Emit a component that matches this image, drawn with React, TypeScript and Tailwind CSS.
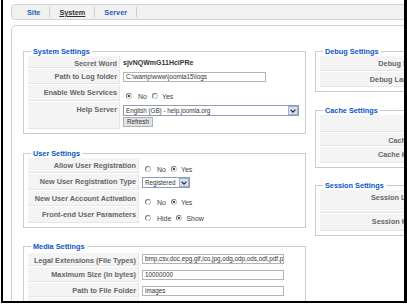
import type { ReactNode } from 'react'

const labelCls =
  'shrink-0 bg-[#f4f4f4] border-b border-r border-[#e6e6e6] pr-[2px] pt-[3px] text-right text-[7.3px] leading-[9px] font-bold text-[#666] whitespace-nowrap'

function Fieldset({ legend, className = '', children }: { legend: string; className?: string; children: ReactNode }) {
  return (
    <fieldset className={`min-w-0 border border-[#cccccc] px-[4px] pb-[4px] ${className}`}>
      <legend className="ml-[3px] px-[2px] text-[7.3px] font-bold leading-[9px] text-[#0b55c4]">{legend}</legend>
      {children}
    </fieldset>
  )
}

function Row({ label, h, w, children }: { label: string; h: string; w: string; children?: ReactNode }) {
  return (
    <div className={`flex gap-[1px] ${h}`}>
      <div className={`${labelCls} ${w}`}>{label}</div>
      <div className="min-w-0 flex-1 pl-[2px] pt-[3px]">{children}</div>
    </div>
  )
}

function Radio({ checked = false, className = '' }: { checked?: boolean; className?: string }) {
  return (
    <span
      className={`flex h-[6px] w-[6px] shrink-0 items-center justify-center rounded-full border border-[#7a7a7a] border-b-[#c8c8c8] border-r-[#c8c8c8] bg-white ${className}`}
    >
      {checked && <span className="h-[2px] w-[2px] rounded-full bg-[#111]" />}
    </span>
  )
}

function Radios({ a, b, first = false }: { a: string; b: string; first?: boolean }) {
  return (
    <div className="flex items-center pl-[3px] pt-[2px] text-[7px] leading-[9px] text-[#444]">
      <Radio checked={first} />
      <span className="ml-[6px] mt-[2px]">{a}</span>
      <Radio checked={!first} className="ml-[5px]" />
      <span className="ml-[4px] mt-[2px]">{b}</span>
    </div>
  )
}

function TextInput({ value, w }: { value: string; w: string }) {
  return (
    <div
      className={`h-[10px] overflow-hidden whitespace-nowrap border border-[#b4b4b4] bg-white pl-[2px] text-[6.3px] leading-[8px] text-[#333] ${w}`}
    >
      {value}
    </div>
  )
}

function Select({ value, w }: { value: string; w: string }) {
  return (
    <div className={`flex h-[11px] border border-[#8c9db5] bg-white ${w}`}>
      <div className="min-w-0 flex-1 overflow-hidden whitespace-nowrap pl-[2px] text-[6.3px] leading-[9px] text-[#333]">
        {value}
      </div>
      <div className="flex w-[10px] items-center justify-center border border-[#9fb0c8] bg-[#d7e0ec]">
        <svg width="6" height="4" viewBox="0 0 6 4">
          <path d="M0.6 0.6 L3 3.1 L5.4 0.6" fill="none" stroke="#1d2b4a" strokeWidth="1.3" />
        </svg>
      </div>
    </div>
  )
}

const tabs = [
  { name: 'Site', active: false },
  { name: 'System', active: true },
  { name: 'Server', active: false },
]

export default function App() {
  return (
    <div className="h-[306px] w-[407px] overflow-hidden bg-white font-['Liberation_Sans',Arial,sans-serif]">
      <div className="ml-[1px] h-[303px] w-[406px] overflow-hidden border-b-2 border-l-2 border-r-[3px] border-black">
        <div className="w-[440px] pl-[8px]">
          {/* Tabs */}
          <div className="mt-[4px] flex h-[16px] w-[420px] items-center rounded-[4px] border border-[#d2d2d2] bg-[#f1f1f1] pl-[6px] text-[7.3px] font-bold leading-[9px]">
            {tabs.map((t) => (
              <div key={t.name} className="flex h-[10px] items-center border-r border-[#cfcfcf] px-[9px]">
                <span className={t.active ? 'text-[#333] underline' : 'text-[#1c5cbf]'}>{t.name}</span>
              </div>
            ))}
          </div>

          {/* Panel */}
          <div className="mt-[5px] flex h-[300px] w-[430px] gap-[9px] rounded-[5px] border border-[#d0d0d0] bg-white pl-[11px] pt-[21px]">
            {/* Left column */}
            <div className="w-[283px] shrink-0">
              <Fieldset legend="System Settings">
                <div className="flex flex-col gap-[1px]">
                  <Row label="Secret Word" h="h-[12px]" w="w-[92px]">
                    <div className="-mt-[1px] text-[7px] font-bold leading-[9px] text-[#333]">sjvNQWmG11HciPRe</div>
                  </Row>
                  <Row label="Path to Log folder" h="h-[15px]" w="w-[92px]">
                    <TextInput value="C:\wamp\www\joomla15\logs" w="w-[143px]" />
                  </Row>
                  <Row label="Enable Web Services" h="h-[16px]" w="w-[92px]">
                    <Radios a="No" b="Yes" first />
                  </Row>
                  <Row label="Help Server" h="h-[27px]" w="w-[92px]">
                    <Select value="English (GB) - help.joomla.org" w="w-[176px]" />
                    <div className="mt-[1px] flex h-[10px] w-[30px] items-center justify-center border border-[#b0b0b0] bg-[#e3e3e3] text-[6.3px] leading-[8px] text-[#333]">
                      Refresh
                    </div>
                  </Row>
                </div>
              </Fieldset>

              <Fieldset legend="User Settings" className="mt-[15px]">
                <div className="flex flex-col gap-[1px]">
                  <Row label="Allow User Registration" h="h-[15px]" w="w-[111px]">
                    <Radios a="No" b="Yes" />
                  </Row>
                  <Row label="New User Registration Type" h="h-[16px]" w="w-[111px]">
                    <Select value="Registered" w="w-[48px]" />
                  </Row>
                  <Row label="New User Account Activation" h="h-[15px]" w="w-[111px]">
                    <Radios a="No" b="Yes" />
                  </Row>
                  <Row label="Front-end User Parameters" h="h-[16px]" w="w-[111px]">
                    <Radios a="Hide" b="Show" />
                  </Row>
                </div>
              </Fieldset>

              <Fieldset legend="Media Settings" className="mt-[14px]">
                <div className="mt-[2px] flex flex-col gap-[1px]">
                  <Row label="Legal Extensions (File Types)" h="h-[13px]" w="w-[111px]">
                    <div className="-mt-[2px]">
                      <TextInput value="bmp,csv,doc,epg,gif,ico,jpg,odg,odp,ods,odt,pdf,png,ppt,swf,txt,xcf,xls" w="w-[142px]" />
                    </div>
                  </Row>
                  <Row label="Maximum Size (in bytes)" h="h-[15px]" w="w-[111px]">
                    <TextInput value="10000000" w="w-[142px]" />
                  </Row>
                  <Row label="Path to File Folder" h="h-[14px]" w="w-[111px]">
                    <TextInput value="images" w="w-[142px]" />
                  </Row>
                  <Row label="Path to Image Folder" h="h-[14px]" w="w-[111px]">
                    <TextInput value="images/stories" w="w-[142px]" />
                  </Row>
                </div>
              </Fieldset>
            </div>

            {/* Right column */}
            <div className="w-[200px] shrink-0">
              <Fieldset legend="Debug Settings">
                <div className="flex flex-col gap-[1px]">
                  <Row label="Debug System" h="h-[15px]" w="w-[112px]">
                    <Radios a="No" b="Yes" first />
                  </Row>
                  <Row label="Debug Language" h="h-[15px]" w="w-[112px]">
                    <Radios a="No" b="Yes" first />
                  </Row>
                </div>
              </Fieldset>

              <Fieldset legend="Cache Settings" className="mt-[14px]">
                <div className="flex flex-col gap-[1px]">
                  <Row label="Cache" h="h-[17px]" w="w-[112px]">
                    <Radios a="No" b="Yes" first />
                  </Row>
                  <Row label="Cache Time" h="h-[13px]" w="w-[112px]">
                    <TextInput value="15" w="w-[30px]" />
                  </Row>
                  <Row label="Cache Handler" h="h-[16px]" w="w-[112px]">
                    <Select value="File" w="w-[48px]" />
                  </Row>
                </div>
              </Fieldset>

              <Fieldset legend="Session Settings" className="mt-[13px]">
                <div className="flex flex-col gap-[1px]">
                  <Row label="Session Lifetime" h="h-[23px]" w="w-[112px]">
                    <TextInput value="15" w="w-[30px]" />
                  </Row>
                  <Row label="Session Handler" h="h-[17px]" w="w-[112px]">
                    <Select value="Database" w="w-[48px]" />
                  </Row>
                </div>
              </Fieldset>
            </div>
          </div>
        </div>
      </div>
    </div>
  )
}
